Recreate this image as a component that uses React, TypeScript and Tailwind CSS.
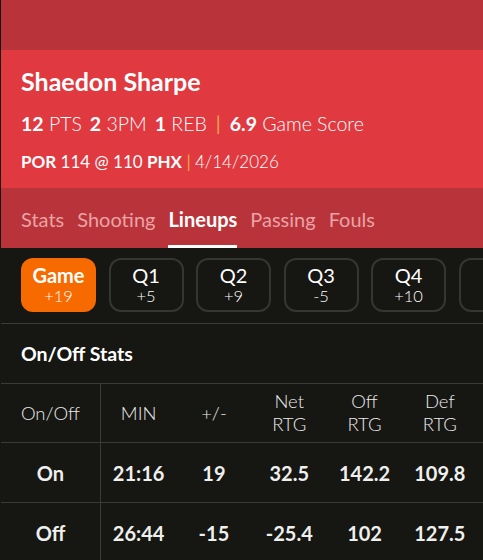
import React from "react";

const tabs = ["Stats", "Shooting", "Lineups", "Passing", "Fouls"];
const periods = [
  { label: "Game", sub: "+19", active: true },
  { label: "Q1", sub: "+5" },
  { label: "Q2", sub: "+9" },
  { label: "Q3", sub: "-5" },
  { label: "Q4", sub: "+10" },
  { label: "", sub: "" },
];
const headers = ["MIN", "+/-", "Net\nRTG", "Off\nRTG", "Def\nRTG"];
const rows = [
  { name: "On", vals: ["21:16", "19", "32.5", "142.2", "109.8"] },
  { name: "Off", vals: ["26:44", "-15", "-25.4", "102", "127.5"] },
];

export default function App() {
  return (
    <div
      className="min-h-[560px] w-full overflow-hidden bg-[#161613] pl-px text-white"
      style={{ fontFamily: "Lato, 'Noto Sans', sans-serif" }}
    >
      <div className="h-[50px] bg-[#b9343a]" />
      <div className="bg-[#e0393f] px-5 pb-[14px] pt-[16px]">
        <div className="text-[25px] font-bold leading-[30px]">Shaedon Sharpe</div>
        <div className="mt-[15px] flex items-center whitespace-pre text-[19.5px] font-light leading-[26px]">
          <span className="font-bold">12</span>
          <span> PTS</span>
          <span className="ml-[8px] font-bold">2</span>
          <span> 3PM</span>
          <span className="ml-[8px] font-bold">1</span>
          <span> REB</span>
          <span className="mx-[9px] font-normal text-[#f7a94a]">|</span>
          <span className="font-bold">6.9</span>
          <span> Game Score</span>
        </div>
        <div className="mt-[13px] flex items-center whitespace-pre text-[17px] leading-[24px]">
          <span className="font-bold">POR</span>
          <span> 114 @ 110 </span>
          <span className="font-bold">PHX</span>
          <span className="text-[#f7a94a]"> | </span>
          <span className="font-light">4/14/2026</span>
        </div>
      </div>
      <div className="flex h-[60px] gap-[13px] bg-[#b9343a] px-5">
        {tabs.map((t) => (
          <div
            key={t}
            className={
              t === "Lineups"
                ? "flex items-center border-b-[3px] border-white pt-[5px] text-[20px] font-bold text-white"
                : "flex items-center border-b-[3px] border-transparent pt-[5px] text-[20px] font-normal text-[#eaa3a6]"
            }
          >
            {t}
          </div>
        ))}
      </div>
      <div className="flex gap-[12.5px] overflow-hidden border-b border-[#3a3a37] px-5 pb-[11px] pt-[10px]">
        {periods.map((p, i) => (
          <div
            key={i}
            className={
              p.active
                ? "flex h-[54px] w-[75px] shrink-0 flex-col items-center justify-center rounded-[12px] bg-[#f76a00]"
                : "flex h-[54px] w-[75px] shrink-0 flex-col items-center justify-center rounded-[12px] border-2 border-[#353532]"
            }
          >
            <span className={p.active ? "text-[20px] font-bold leading-[23px]" : "text-[20px] font-normal leading-[23px]"}>
              {p.label}
            </span>
            <span className="text-[16.5px] font-light leading-[19px]">{p.sub}</span>
          </div>
        ))}
      </div>
      <div className="flex h-[59px] items-center px-5 text-[19.5px] font-bold">On/Off Stats</div>
      <div className="border-t border-[#3a3a37]">
        <div className="flex h-[59px] border-b border-[#3a3a37] text-[18.5px] font-light leading-[23px] text-[#ececea]">
          <div className="flex w-[100px] items-center justify-center border-r border-[#3a3a37]">On/Off</div>
          {headers.map((h) => (
            <div key={h} className="flex w-[75.3px] items-center justify-center whitespace-pre text-center">
              {h}
            </div>
          ))}
        </div>
        {rows.map((r) => (
          <div key={r.name} className="flex h-[60px] border-b border-[#3a3a37] text-[20px] font-bold text-[#efefed]">
            <div className="flex w-[100px] items-center justify-center border-r border-[#3a3a37]">{r.name}</div>
            {r.vals.map((v, i) => (
              <div key={i} className="flex w-[75.3px] items-center justify-center">
                {v}
              </div>
            ))}
          </div>
        ))}
      </div>
    </div>
  );
}
